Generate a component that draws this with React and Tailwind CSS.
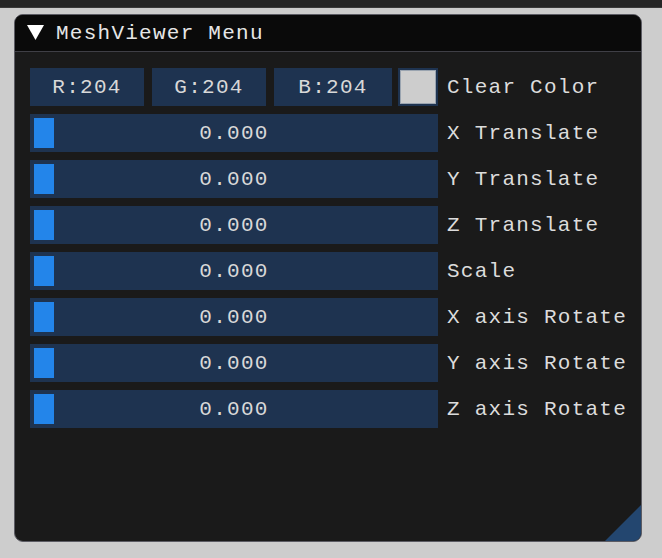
import React from "react";

const mono = { fontFamily: '"Liberation Mono", "DejaVu Sans Mono", monospace' };

function SliderRow({ label }) {
  return (
    <div className="flex items-center h-[38px]">
      <div className="relative w-[408px] h-[38px] bg-[#1e3350] flex items-center justify-center">
        <div className="absolute left-[4px] top-[4px] w-[20px] h-[30px] bg-[#2385ea]" />
        <span className="text-[21px] tracking-[1.25px] text-[#d8d8d8] leading-none">0.000</span>
      </div>
      <span className="ml-[9px] text-[21px] tracking-[1.25px] text-[#dcdcdc] leading-none whitespace-nowrap">
        {label}
      </span>
    </div>
  );
}

function Btn({ w, children }) {
  return (
    <div className={`h-[38px] bg-[#1e3350] flex items-center justify-center ${w}`}>
      <span className="text-[21px] tracking-[1.25px] text-[#d8d8d8] leading-none">{children}</span>
    </div>
  );
}

export default function App() {
  const labels = [
    "X Translate",
    "Y Translate",
    "Z Translate",
    "Scale",
    "X axis Rotate",
    "Y axis Rotate",
    "Z axis Rotate",
  ];
  return (
    <div className="w-[662px] h-[558px] bg-[#cdcdcd] overflow-hidden" style={mono}>
      <div className="h-[8px] bg-[#262626] border-b border-[#3a3a3a]" />
      <div className="ml-[14px] mt-[6px] w-[628px] h-[528px] rounded-[9px] border border-[#5c5c64] bg-[#1a1a1a] overflow-hidden relative">
        <div className="h-[37px] bg-[#0a0a0a] border-b border-[#3f3f46] flex items-center">
          <svg width="17" height="15" viewBox="0 0 17 15" className="ml-[12px] mt-[-2px]">
            <polygon points="0,0 17,0 8.5,15" fill="#ffffff" />
          </svg>
          <span className="ml-[12px] text-[21px] tracking-[1.25px] text-[#e6e6e6] leading-none">
            MeshViewer Menu
          </span>
        </div>
        <div className="pl-[15px] pt-[16px] flex flex-col gap-[8px]">
          <div className="flex items-center h-[38px]">
            <Btn w="w-[114px]">R:204</Btn>
            <div className="w-[8px]" />
            <Btn w="w-[114px]">G:204</Btn>
            <div className="w-[8px]" />
            <Btn w="w-[118px]">B:204</Btn>
            <div className="ml-[6px] w-[40px] h-[38px] bg-[#1e3350] p-[2px]">
              <div className="w-full h-full bg-[#cdcdcd] border border-[#9aa4b0]" />
            </div>
            <span className="ml-[9px] text-[21px] tracking-[1.25px] text-[#dcdcdc] leading-none whitespace-nowrap">
              Clear Color
            </span>
          </div>
          {labels.map((l) => (
            <SliderRow key={l} label={l} />
          ))}
        </div>
        <svg width="36" height="36" viewBox="0 0 36 36" className="absolute right-0 bottom-0">
          <polygon points="0,36 36,0 36,36" fill="#23466f" />
        </svg>
      </div>
    </div>
  );
}
